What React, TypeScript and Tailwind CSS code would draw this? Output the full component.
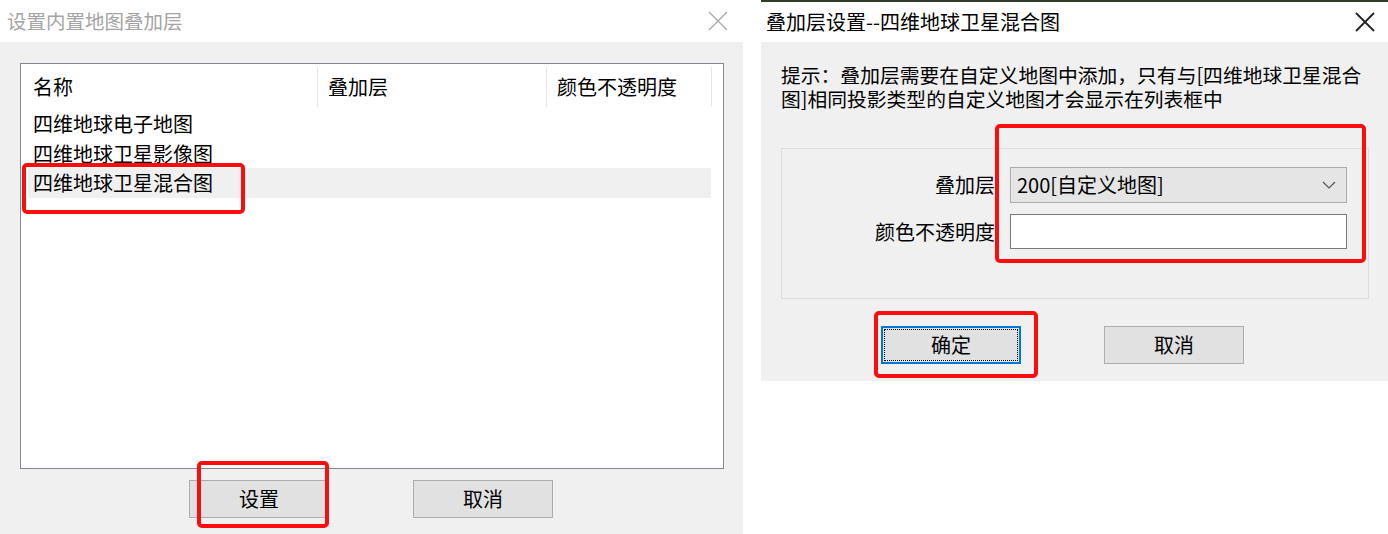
import React from "react";

function CloseIcon({ color, width }: { color: string; width: number }) {
  return (
    <svg width="20" height="20" viewBox="0 0 20 20" fill="none">
      <path d="M1 1 L19 19 M19 1 L1 19" stroke={color} strokeWidth={width} />
    </svg>
  );
}

function WinButton({ label }: { label: string }) {
  return (
    <div className="w-[140px] h-[38px] bg-[#e1e1e1] border border-[#adadad] flex items-center justify-center text-[20px] leading-none text-black">
      {label}
    </div>
  );
}

export default function App() {
  return (
    <div className="relative w-[1388px] h-[534px] bg-white flex overflow-hidden font-['Noto_Sans_CJK_SC',sans-serif]">
      {/* Left dialog */}
      <div className="w-[743px] h-full flex flex-col">
        <div className="h-[42px] shrink-0 bg-white flex items-center justify-between pl-[7px] pr-[15px]">
          <span className="text-[19.5px] leading-none text-[#a3a3a3]">设置内置地图叠加层</span>
          <CloseIcon color="#a8a8a8" width={1.3} />
        </div>
        <div className="flex-1 bg-[#f0f0f0] pl-[20px] pt-[21px]">
          <div className="w-[704px] h-[406px] border border-[#828790] bg-white flex flex-col">
            <div className="h-[45px] flex items-center text-[20px] leading-none text-black">
              <div className="w-[296px] pl-[12px] pt-[1px]">名称</div>
              <div className="w-px h-[40px] bg-[#e5e5e5]" />
              <div className="w-[228px] pl-[10px] pt-[1px]">叠加层</div>
              <div className="w-px h-[40px] bg-[#e5e5e5]" />
              <div className="w-[164px] pl-[10px] pt-[1px]">颜色不透明度</div>
              <div className="w-px h-[40px] bg-[#e5e5e5]" />
            </div>
            <div className="flex flex-col text-[20px] leading-none text-black">
              <div className="ml-[7px] w-[683px] h-[30px] flex items-center pl-[5px]">四维地球电子地图</div>
              <div className="ml-[7px] w-[683px] h-[29px] flex items-center pl-[5px]">四维地球卫星影像图</div>
              <div className="ml-[7px] w-[683px] h-[30px] flex items-center pl-[5px] bg-[#f0f0f0]">四维地球卫星混合图</div>
            </div>
          </div>
          <div className="flex gap-[84px] pl-[169px] mt-[11px]">
            <WinButton label="设置" />
            <WinButton label="取消" />
          </div>
        </div>
      </div>

      {/* Right dialog */}
      <div className="ml-[18px] w-[627px] h-full flex flex-col">
        <div className="h-[2px] bg-[#2f3c2c]" />
        <div className="h-[40px] bg-white flex items-center justify-between pl-[5px] pr-[13px]">
          <span className="text-[20px] leading-none text-black">叠加层设置--四维地球卫星混合图</span>
          <CloseIcon color="#222222" width={1.8} />
        </div>
        <div className="h-[339px] bg-[#f0f0f0] pl-[20px] pt-[23px]">
          <div className="flex flex-col gap-[4px] text-[19.8px] leading-none text-black whitespace-nowrap">
            <div className="h-[20px]">提示：叠加层需要在自定义地图中添加，只有与[四维地球卫星混合</div>
            <div className="h-[20px]">图]相同投影类型的自定义地图才会显示在列表框中</div>
          </div>
          <div className="mt-[39px] w-[588px] h-[151px] border border-[#dcdcdc] pt-[18px] flex flex-col gap-[11px]">
            <div className="flex items-center">
              <div className="w-[213px] text-right text-[20px] leading-none text-black">叠加层</div>
              <div className="ml-[15px] w-[337px] h-[36px] bg-[#e5e5e5] border border-[#acacac] flex items-center justify-between pl-[6px] pr-[10px]">
                <span className="text-[20px] leading-none text-black">200[自定义地图]</span>
                <svg width="14" height="8" viewBox="0 0 14 8" fill="none">
                  <path d="M1 1 L7 7 L13 1" stroke="#555" strokeWidth="1.2" />
                </svg>
              </div>
            </div>
            <div className="flex items-center">
              <div className="w-[213px] text-right text-[20px] leading-none text-black">颜色不透明度</div>
              <div className="ml-[15px] w-[337px] h-[35px] bg-white border border-[#7a7a7a]" />
            </div>
          </div>
          <div className="flex gap-[83px] pl-[100px] mt-[27px]">
            <div className="w-[140px] h-[38px] bg-[#e1e1e1] border-2 border-[#0078d7] p-[1px] flex">
              <div className="flex-1 border border-dotted border-black flex items-center justify-center text-[20px] leading-none text-black">
                确定
              </div>
            </div>
            <WinButton label="取消" />
          </div>
        </div>
      </div>

      {/* Red annotation boxes */}
      <div className="absolute left-[22px] top-[163px] w-[223px] h-[51px] border-[4px] border-[#fb0d0d] rounded-[5px]" />
      <div className="absolute left-[197px] top-[461px] w-[132px] h-[67px] border-[4px] border-[#fb0d0d] rounded-[5px]" />
      <div className="absolute left-[995px] top-[124px] w-[371px] h-[139px] border-[4px] border-[#fb0d0d] rounded-[5px]" />
      <div className="absolute left-[874px] top-[311px] w-[164px] h-[67px] border-[4px] border-[#fb0d0d] rounded-[5px]" />
    </div>
  );
}
